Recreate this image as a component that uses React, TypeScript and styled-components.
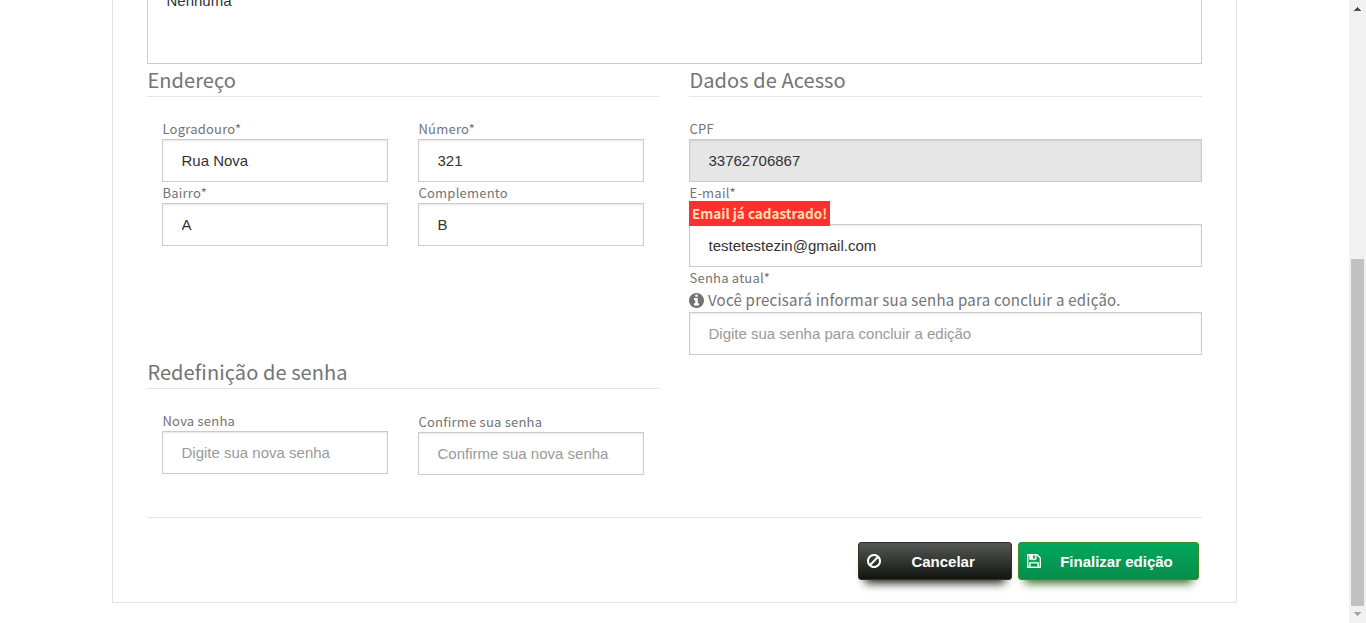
import React from 'react';
import styled, { createGlobalStyle } from 'styled-components';

const GlobalStyle = createGlobalStyle`
  * { box-sizing: border-box; }
  body {
    margin: 0;
    background: #fff;
    color: #737375;
    font-family: 'Noto Sans CJK SC', 'Noto Sans', sans-serif;
    overflow: hidden;
  }
`;

const Page = styled.div`
  display: flex;
  height: 623px;
  overflow: hidden;
`;

const Content = styled.main`
  flex: 1;
  height: 623px;
  overflow: hidden;
  padding-left: 112px;
`;

const Card = styled.form`
  width: 1125px;
  height: 663px;
  margin-top: -60px;
  padding: 0 34px;
  border: 1px solid #e3e3e3;
`;

const Notes = styled.div`
  height: 123px;
  padding: 47px 18.5px 0;
  border: 1px solid #ccc;
  color: #333;
  font-family: 'Liberation Sans', Arial, sans-serif;
  font-size: 15px;
  line-height: 24px;
`;

const Columns = styled.div`
  display: grid;
  grid-template-columns: 512px 513px;
  column-gap: 30px;
  height: 453px;
`;

const Section = styled.section<{ $height?: number }>`
  height: ${(p) => (p.$height ? `${p.$height}px` : 'auto')};
`;

const Title = styled.h2`
  height: 33px;
  margin: 0 0 21px;
  padding-left: 0.4px;
  border-bottom: 1px solid #e5e5e5;
  font-size: 20px;
  font-weight: 400;
  line-height: 31px;
  letter-spacing: 0.08px;
  white-space: nowrap;
`;

const FieldGrid = styled.div`
  display: grid;
  grid-template-columns: 226px 226px;
  column-gap: 30px;
  padding: 0 15px;
`;

const Field = styled.div<{ $offset?: number }>`
  padding-top: ${(p) => p.$offset ?? 0}px;
`;

const Label = styled.label`
  display: block;
  height: 21px;
  padding-left: 0.5px;
  font-size: 13px;
  line-height: 21px;
  letter-spacing: 0.22px;
  white-space: nowrap;
`;

const Input = styled.input`
  display: block;
  width: 100%;
  height: 43px;
  padding: 0 18.5px;
  border: 1px solid #ccc;
  border-radius: 0;
  outline: none;
  background: #fff;
  box-shadow: inset 0 1px 2px rgba(0, 0, 0, 0.1);
  color: #333;
  font-family: 'Liberation Sans', Arial, sans-serif;
  font-size: 15px;
  &::placeholder { color: #999; opacity: 1; }
  &:disabled { background: #e6e6e6; color: #333; }
`;

const ErrorBadge = styled.strong`
  display: block;
  position: relative;
  width: 141px;
  height: 25px;
  margin: -2px 0 -2px;
  padding-left: 3px;
  background: #ff2f2f;
  color: #ffdfae;
  font-size: 13.5px;
  font-weight: 700;
  line-height: 25px;
  white-space: nowrap;
`;

const Hint = styled.p`
  display: flex;
  align-items: center;
  gap: 4px;
  height: 24px;
  margin: 0;
  font-size: 15px;
  line-height: 24px;
  letter-spacing: 0.24px;
  white-space: nowrap;
`;

const Actions = styled.div`
  display: flex;
  justify-content: flex-end;
  gap: 6px;
  padding: 24px 3px 0 0;
  border-top: 1px solid #e5e5e5;
`;

const Button = styled.button<{ $primary?: boolean }>`
  display: flex;
  align-items: center;
  width: ${(p) => (p.$primary ? 181 : 154)}px;
  height: 38px;
  padding: 0 0 0 8px;
  border: 1px solid ${(p) => (p.$primary ? '#3f8a25' : '#2c3424')};
  border-radius: 3px;
  background: ${(p) =>
    p.$primary
      ? 'linear-gradient(#00a85c, #078d4c)'
      : 'linear-gradient(#555754, #11140f)'};
  box-shadow: 0 10px 10px -7px ${(p) => (p.$primary ? '#2b6a1b' : '#171b12')};
  color: #fff;
  font-family: 'Liberation Sans', Arial, sans-serif;
  font-size: 15px;
  font-weight: 700;
  white-space: nowrap;
`;

const ButtonText = styled.span<{ $indent: number }>`
  padding-left: ${(p) => p.$indent}px;
`;

const Icon = styled.svg<{ $w: number; $h: number; $stroke?: number }>`
  flex: none;
  width: ${(p) => p.$w}px;
  height: ${(p) => p.$h}px;
  fill: currentColor;
  stroke: currentColor;
  stroke-width: ${(p) => p.$stroke ?? 0};
`;

const Scrollbar = styled.div`
  display: flex;
  flex-direction: column;
  align-items: center;
  width: 17px;
  background: #f1f1f1;
`;

const Arrow = styled.svg`
  display: block;
  width: 17px;
  height: 17px;
  shape-rendering: crispEdges;
`;

const Thumb = styled.div`
  width: 13px;
  height: 347px;
  margin: 242px 0 0;
  background: #c1c1c1;
`;

const BAN =
  'M1440 893q0-161-87-295l-754 753q137 89 297 89 111 0 211.5-43.5t173.5-116.5 116-174.5 43-212.5zm-999 299l755-754q-135-91-300-91-148 0-273 73t-198 199-73 274q0 162 89 299zm1223-299q0 157-61 300t-163.5 246-245 164-298.5 61-298.5-61-245-164-163.5-246-61-300 61-299.5 163.5-245.5 245-164 298.5-61 298.5 61 245 164 163.5 245.5 61 299.5z';
const SAVE =
  'M384 1536h768v-384h-768v384zm896 0h128v-896q0-14-10-38.5t-20-34.5l-281-281q-10-10-34-20t-39-10v416q0 40-28 68t-68 28h-576q-40 0-68-28t-28-68v-416h-128v1280h128v-416q0-40 28-68t68-28h832q40 0 68 28t28 68v416zm-384-928v-320q0-13-9.5-22.5t-22.5-9.5h-192q-13 0-22.5 9.5t-9.5 22.5v320q0 13 9.5 22.5t22.5 9.5h192q13 0 22.5-9.5t9.5-22.5zm640 32v928q0 40-28 68t-68 28h-1344q-40 0-68-28t-28-68v-1344q0-40 28-68t68-28h928q40 0 88 20t76 48l280 280q28 28 48 76t20 88z';
const INFO =
  'M1152 1376v-160q0-14-9-23t-23-9h-96v-512q0-14-9-23t-23-9h-320q-14 0-23 9t-9 23v160q0 14 9 23t23 9h96v320h-96q-14 0-23 9t-9 23v160q0 14 9 23t23 9h448q14 0 23-9t9-23zm-128-896v-160q0-14-9-23t-23-9h-192q-14 0-23 9t-9 23v160q0 14 9 23t23 9h192q14 0 23-9t9-23zm640 416q0 209-103 385.5t-279.5 279.5-385.5 103-385.5-103-279.5-279.5-103-385.5 103-385.5 279.5-279.5 385.5-103 385.5 103 279.5 279.5 103 385.5z';

type TextFieldProps = {
  label: string;
  value?: string;
  placeholder?: string;
  offset?: number;
  disabled?: boolean;
  password?: boolean;
  children?: React.ReactNode;
};

function TextField({ label, value, placeholder, offset, disabled, password, children }: TextFieldProps) {
  return (
    <Field $offset={offset}>
      <Label>{label}</Label>
      {children}
      <Input
        type={password ? 'password' : 'text'}
        defaultValue={value}
        placeholder={placeholder}
        disabled={disabled}
      />
    </Field>
  );
}

export default function App() {
  return (
    <Page>
      <GlobalStyle />
      <Content>
        <Card>
          <Notes>Nenhuma</Notes>
          <Columns>
            <div>
              <Section $height={292}>
                <Title>Endereço</Title>
                <FieldGrid>
                  <TextField label="Logradouro*" value="Rua Nova" />
                  <TextField label="Número*" value="321" />
                  <TextField label="Bairro*" value="A" />
                  <TextField label="Complemento" value="B" />
                </FieldGrid>
              </Section>
              <Section>
                <Title>Redefinição de senha</Title>
                <FieldGrid>
                  <TextField label="Nova senha" placeholder="Digite sua nova senha" password />
                  <TextField label="Confirme sua senha" placeholder="Confirme sua nova senha" offset={1} password />
                </FieldGrid>
              </Section>
            </div>
            <Section>
              <Title>Dados de Acesso</Title>
              <TextField label="CPF" value="33762706867" disabled />
              <TextField label="E-mail*" value="testetestezin@gmail.com">
                <ErrorBadge>Email já cadastrado!</ErrorBadge>
              </TextField>
              <TextField label="Senha atual*" placeholder="Digite sua senha para concluir a edição" password>
                <Hint>
                  <Icon $w={15} $h={15} viewBox="128 128 1536 1536"><path d={INFO} /></Icon>
                  Você precisará informar sua senha para concluir a edição.
                </Hint>
              </TextField>
            </Section>
          </Columns>
          <Actions>
            <Button type="button">
              <Icon $w={14} $h={14} viewBox="128 128 1536 1536"><path d={BAN} /></Icon>
              <ButtonText $indent={30.4}>Cancelar</ButtonText>
            </Button>
            <Button type="button" $primary>
              <Icon $w={14} $h={14} $stroke={40} viewBox="0 128 1536 1536"><path d={SAVE} /></Icon>
              <ButtonText $indent={19.2}>Finalizar edição</ButtonText>
            </Button>
          </Actions>
        </Card>
      </Content>
      <Scrollbar>
        <Arrow viewBox="0 0 17 17"><path fill="#505050" d="M8 7h1v1h1v1h1v1h1v1H5v-1h1V9h1V8h1z" /></Arrow>
        <Thumb />
        <Arrow viewBox="0 0 17 17"><path fill="#a3a3a3" d="M5 6h7v1h-1v1h-1v1H9v1H8V9H7V8H6V7H5z" /></Arrow>
      </Scrollbar>
    </Page>
  );
}
